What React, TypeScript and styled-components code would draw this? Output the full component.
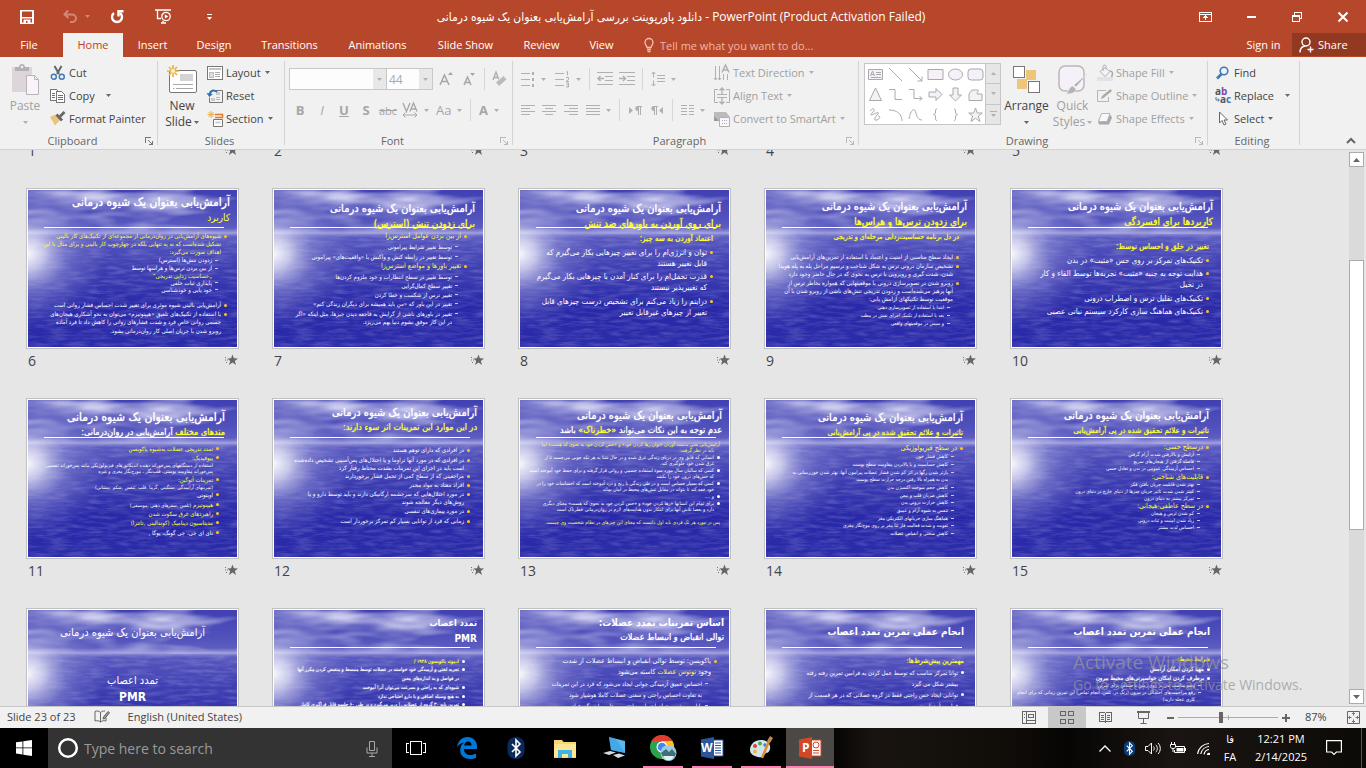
import React from "react";
import styled, { createGlobalStyle, css } from "styled-components";

const Global = createGlobalStyle`
  * { box-sizing: border-box; }
  html, body { margin: 0; height: 100%; overflow: hidden; }
  body { font-family: "Open Sans", "DejaVu Sans Condensed", "DejaVu Sans", sans-serif; font-size: 11px; color: #444; }
  button, input { font: inherit; color: inherit; border: 0; background: none; padding: 0; margin: 0; outline: none; }
  button { white-space: nowrap; }
  svg { display: block; flex: none; overflow: visible; }
`;

const Shell = styled.div`
  display: flex;
  flex-direction: column;
  height: 100vh;
  overflow: hidden;
  background: #e6e6e6;
`;

/* ---------- title bar and tabs ---------- */

const TitleBar = styled.header`
  display: flex;
  align-items: center;
  justify-content: space-between;
  flex: none;
  height: 33px;
  background: #b7472a;
  color: #fff;
`;
const QuickAccess = styled.div`
  display: flex;
  align-items: center;
  flex: 1;
  padding-left: 16px;
`;
const QuickButton = styled.button<{ $w: number; $dim?: boolean }>`
  display: flex;
  align-items: center;
  justify-content: center;
  gap: 8px;
  width: ${(p) => p.$w}px;
  height: 30px;
  opacity: ${(p) => (p.$dim ? 0.35 : 1)};
`;
const DocTitle = styled.h1`
  margin: 0;
  font-size: 12px;
  font-weight: 400;
  white-space: nowrap;
`;
const WindowButtons = styled.div`
  display: flex;
  flex: 1;
  justify-content: flex-end;
  padding-left: 20px;
`;
const WindowButton = styled.button`
  display: flex;
  align-items: center;
  justify-content: center;
  width: 46px;
  height: 30px;
`;
const TabBar = styled.nav`
  display: flex;
  flex: none;
  height: 24px;
  background: #b7472a;
  color: #fff;
`;
const Tab = styled.button<{ $w: number; $active?: boolean; $after?: number }>`
  width: ${(p) => p.$w}px;
  height: 24px;
  margin-right: ${(p) => p.$after ?? 0}px;
  line-height: 24px;
  text-align: center;
  ${(p) => p.$active && css`background: #f1f1f1; color: #c43e1c;`}
`;
const TellMe = styled.label`
  display: flex;
  align-items: center;
  gap: 6px;
  flex: 1;
  padding-left: 15px;
`;
const TellInput = styled.input`
  flex: 1;
  &::placeholder { color: #efb8a6; opacity: 1; }
`;
const ShareButton = styled.button`
  display: flex;
  align-items: center;
  gap: 4px;
  width: 74px;
  height: 23px;
  padding-left: 7px;
  background: #923922;
`;

/* ---------- ribbon ---------- */

const RibbonBar = styled.section`
  display: flex;
  flex: none;
  height: 93px;
  background: #f1f1f1;
  border-bottom: 1px solid #d2d2d2;
`;
const Group = styled.div<{ $w: number }>`
  display: flex;
  flex-direction: column;
  width: ${(p) => p.$w}px;
  padding-top: 4px;
`;
const GroupBody = styled.div<{ $pad?: number }>`
  display: flex;
  height: 71px;
  padding-left: ${(p) => p.$pad ?? 3}px;
`;
const GroupFooter = styled.div`
  display: flex;
  align-items: center;
  height: 17px;
  padding-right: 3px;
  color: #666;
`;
const GroupName = styled.span`
  flex: 1;
  text-align: center;
`;
const LauncherButton = styled.button<{ $off?: boolean }>`
  width: 9px;
  height: 9px;
  opacity: ${(p) => (p.$off ? 0.45 : 1)};
`;
const Divider = styled.div`
  flex: none;
  width: 1px;
  height: 84px;
  margin-top: 4px;
  background: #d4d4d4;
`;
const Column = styled.div<{ $w?: number }>`
  display: flex;
  flex-direction: column;
  width: ${(p) => (p.$w ? p.$w + "px" : "auto")};
`;
const SmallButton = styled.button<{ $off?: boolean; $gap?: number }>`
  display: flex;
  align-items: center;
  gap: 3px;
  height: 23px;
  padding: 0 4px;
  color: ${(p) => (p.$off ? "#a0a0a0" : "#444")};
  & > svg:last-child:not(:first-child) { margin-left: ${(p) => p.$gap ?? 1}px; }
`;
const BigButton = styled.button<{ $w: number; $off?: boolean }>`
  display: flex;
  flex-direction: column;
  align-items: center;
  width: ${(p) => p.$w}px;
  color: ${(p) => (p.$off ? "#a0a0a0" : "#444")};
  font-size: 12px;
  line-height: 16px;
`;
const BigIcon = styled.span`
  display: flex;
  align-items: center;
  justify-content: center;
  height: 37px;
`;
const BigLine = styled.span`
  display: flex;
  align-items: center;
  gap: 2px;
  height: 16px;
`;
const ToolRow = styled.div<{ $first?: boolean }>`
  display: flex;
  align-items: center;
  height: 22px;
  margin-top: ${(p) => (p.$first ? 7 : 9)}px;
`;
const Tool = styled.button<{ $w?: number; $split?: boolean; $size?: number }>`
  display: flex;
  align-items: center;
  justify-content: ${(p) => (p.$split ? "flex-start" : "center")};
  gap: 6px;
  width: ${(p) => p.$w ?? (p.$split ? 34 : 22)}px;
  height: 22px;
  padding-left: ${(p) => (p.$split ? 4 : 0)}px;
  color: #a6a6a6;
  font-size: ${(p) => p.$size ?? 13}px;
`;
const ToolSep = styled.span`
  width: 1px;
  height: 22px;
  margin: 0 4px;
  background: #d6d6d6;
`;
const Combo = styled.div<{ $w: number }>`
  display: flex;
  width: ${(p) => p.$w}px;
  height: 22px;
  border: 1px solid #c8c8c8;
  background: #fdfdfd;
  & + & { margin-left: -1px; }
`;
const ComboInput = styled.input`
  flex: 1;
  min-width: 0;
  padding-left: 2px;
  color: #a3a9b8;
  font-size: 12px;
`;
const ComboArrow = styled.button`
  display: flex;
  align-items: center;
  justify-content: center;
  width: 13px;
  background: #e8e8e8;
`;
const Gallery = styled.div`
  display: flex;
  width: 137px;
  height: 62px;
  margin-top: 2px;
  border: 1px solid #c6c6c6;
  background: #fff;
`;
const GalleryGrid = styled.div`
  display: grid;
  grid-template-columns: repeat(6, 20px);
  grid-auto-rows: 20px;
  flex: 1;
`;
const ShapeButton = styled.button`
  display: flex;
  align-items: center;
  justify-content: center;
`;
const GalleryScroll = styled.div`
  display: flex;
  flex-direction: column;
  width: 15px;
  background: #e6e6e6;
  border-left: 1px solid #c6c6c6;
`;
const GalleryStep = styled.button`
  display: flex;
  align-items: center;
  justify-content: center;
  flex: 1;
  & + & { border-top: 1px solid #c6c6c6; }
`;
const RibbonEnd = styled.div`
  display: flex;
  flex: 1;
  align-items: flex-end;
  justify-content: flex-end;
  padding: 0 9px 4px 0;
`;

/* ---------- slide sorter ---------- */

const Workspace = styled.main`
  position: relative;
  display: flex;
  flex: 1;
  min-height: 0;
  overflow: hidden;
`;
const Sorter = styled.div`
  flex: 1;
  overflow: hidden;
`;
const SlideGrid = styled.div`
  display: grid;
  grid-template-columns: repeat(auto-fill, 213px);
  gap: 0 33px;
  margin-top: -172px;
  padding: 0 26px;
`;
const SlideItem = styled.figure`
  margin: 0;
  height: 210px;
`;
const Frame = styled.div`
  height: 161px;
  padding: 1px;
  border: 1px solid #c0c0c0;
  background: #fff;
`;
const Thumb = styled.div`
  display: grid;
  height: 157px;
  overflow: hidden;
  background: #3232ae;
  & > * { grid-area: 1 / 1; min-width: 0; min-height: 0; }
`;
const Content = styled.div`
  z-index: 1;
  direction: rtl;
  font-family: "DejaVu Sans Condensed", "DejaVu Sans", sans-serif;
  color: #fff;
  white-space: nowrap;
`;
const Head = styled.div<{ $top: number; $right: number }>`
  height: 37px;
  padding: ${(p) => p.$top}px ${(p) => p.$right}px 0 0;
`;
type Weight = "plain" | "semi" | "bold";
const weight = (w?: Weight) =>
  w === "bold" ? css`font-weight: 700;` : w === "semi" ? css`font-weight: 400; text-shadow: 0 0 1px currentColor;` : css`font-weight: 400;`;
const Heading = styled.div<{ $size: number; $weight?: Weight; $c?: string }>`
  height: 15px;
  font-size: ${(p) => p.$size}px;
  line-height: 15px;
  color: ${(p) => p.$c ?? "#fff"};
  ${(p) => weight(p.$weight)}
`;
const Rule = styled.div`
  height: 1px;
  margin: 0 13px 0 16px;
  background: #fff;
`;
const Body = styled.div<{ $right: number; $top: number }>`
  padding: ${(p) => p.$top}px ${(p) => p.$right}px 0 0;
`;
const Line = styled.div<{ $h: number; $before: number; $size: number; $c: string; $in: number; $semi?: boolean }>`
  display: flex;
  align-items: center;
  height: ${(p) => p.$h}px;
  margin-top: ${(p) => p.$before}px;
  padding-right: ${(p) => p.$in}px;
  font-size: ${(p) => p.$size}px;
  line-height: ${(p) => p.$h}px;
  color: ${(p) => p.$c};
  ${(p) => weight(p.$semi ? "semi" : "plain")}
`;
const Dot = styled.span<{ $c: string }>`
  width: 3px;
  height: 3px;
  margin-left: 3px;
  border-radius: 50%;
  background: ${(p) => p.$c};
`;
const Dash = styled.span`
  width: 3px;
  height: 1px;
  margin-left: 3px;
  background: #c8c8ec;
`;
const Cover = styled.div`
  display: flex;
  flex-direction: column;
  align-items: center;
  padding-top: 15px;
`;
const CoverBody = styled.div`
  display: flex;
  flex-direction: column;
  align-items: center;
  gap: 2px;
  margin-top: 33px;
`;
const Caption = styled.figcaption`
  display: flex;
  align-items: center;
  justify-content: space-between;
  height: 22px;
  padding: 0 1px 0 2px;
  font-size: 14px;
`;
const ScrollBar = styled.div`
  display: flex;
  flex-direction: column;
  flex: none;
  width: 17px;
  padding: 2px 1px 2px 0;
`;
const ScrollStep = styled.button`
  display: flex;
  align-items: center;
  justify-content: center;
  width: 15px;
  height: 15px;
  background: #fff;
  border: 1px solid #ababab;
`;
const ScrollTrack = styled.div`
  flex: 1;
  width: 15px;
  padding-top: 93px;
  background: #dadada;
`;
const ScrollThumb = styled.div`
  height: 63%;
  width: 15px;
  background: #fff;
  border: 1px solid #ababab;
`;
const Watermark = styled.div`
  position: absolute;
  right: 57px;
  bottom: 10px;
  z-index: 3;
  width: 236px;
  color: rgba(150, 150, 155, 0.75);
  font-size: 14px;
  line-height: 22px;
  white-space: nowrap;
`;
const WatermarkTitle = styled.div`
  font-size: 19px;
  line-height: 24px;
`;

/* ---------- status bar ---------- */

const StatusBar = styled.footer`
  display: flex;
  align-items: center;
  justify-content: space-between;
  flex: none;
  height: 22px;
  background: #f1f1f1;
  border-top: 1px solid #c6c6c6;
`;
const StatusSide = styled.div`
  display: flex;
  align-items: center;
  height: 100%;
  line-height: 19px;
`;
const StatusLeft = styled(StatusSide)`
  gap: 18px;
  padding: 0 0 2px 7px;
`;
const StatusRight = styled(StatusSide)`
  padding-right: 5px;
`;
const ViewButton = styled.button<{ $active?: boolean }>`
  display: flex;
  align-items: center;
  justify-content: center;
  width: 38px;
  height: 100%;
  background: ${(p) => (p.$active ? "#c8c8c8" : "none")};
`;
const ZoomButton = styled.button`
  display: flex;
  align-items: center;
  justify-content: center;
  width: 16px;
  height: 100%;
`;
const ZoomRange = styled.input`
  appearance: none;
  width: 100px;
  height: 15px;
  background: linear-gradient(#ababab, #ababab) center / 100% 1px no-repeat,
    linear-gradient(#ababab, #ababab) 50px center / 1px 5px no-repeat;
  &::-webkit-slider-thumb {
    appearance: none;
    width: 4px;
    height: 11px;
    background: #666;
  }
`;
const Percent = styled.span`
  width: 22px;
  height: 100%;
  margin: 0 18px 0 11px;
`;

/* ---------- taskbar ---------- */

const Taskbar = styled.div`
  display: flex;
  flex: none;
  height: 40px;
  color: #fff;
  background: linear-gradient(90deg, #000 0, #000 60%, #191410 64%, #100c08 74%, #060504 78%, #1a1512 86%, #0c0a07 100%);
`;
const StartButton = styled.button`
  display: flex;
  align-items: center;
  justify-content: center;
  width: 48px;
`;
const Search = styled.label`
  display: flex;
  align-items: center;
  gap: 5px;
  width: 344px;
  padding: 0 14px 0 9px;
  background: #333;
`;
const SearchInput = styled.input`
  flex: 1;
  font-size: 14px;
  &::placeholder { color: #9a9a9a; opacity: 1; }
`;
const TaskItem = styled.button<{ $open?: boolean; $active?: boolean }>`
  display: flex;
  align-items: center;
  justify-content: center;
  width: 48px;
  margin-right: 1px;
  background: ${(p) => (p.$active ? "#4b4846" : "none")};
  ${(p) => p.$open && css`
    background-image: linear-gradient(#ff80b3, #ff80b3);
    background-repeat: no-repeat;
    background-position: center bottom;
    background-size: ${p.$active ? "100%" : "40px"} 2px;
  `}
`;
const FirstTask = styled(TaskItem)`
  margin-right: 3px;
`;
const Tray = styled.div`
  display: flex;
  flex: 1;
  justify-content: flex-end;
`;
const TrayButton = styled.button<{ $w: number }>`
  display: flex;
  flex-direction: column;
  align-items: center;
  justify-content: center;
  width: ${(p) => p.$w}px;
  line-height: 18px;
`;
const ShowDesktop = styled.button`
  width: 5px;
  margin-left: 13px;
  border-left: 1px solid #555;
`;

/* ---------- icons ---------- */

type IconProps = { w?: number; h?: number; children: React.ReactNode; stroke?: string; fill?: string; sw?: number; crisp?: boolean };
const Icon = ({ w = 16, h = 16, children, stroke = "none", fill = "none", sw = 1, crisp }: IconProps) => (
  <svg width={w} height={h} viewBox={`0 0 ${w} ${h}`} fill={fill} stroke={stroke} strokeWidth={sw} shapeRendering={crisp ? "crispEdges" : undefined} aria-hidden>
    {children}
  </svg>
);
const Arrow = ({ c = "#666" }: { c?: string }) => (
  <Icon w={5} h={3} fill={c}><path d="M0 0h5L2.500 3z" /></Icon>
);
const Up = ({ c = "#666" }: { c?: string }) => (
  <Icon w={7} h={4} fill={c}><path d="M0 4h7L3.500 0z" /></Icon>
);
const G = "#b0b0b0";

const Launcher = ({ off }: { off?: boolean }) => (
  <LauncherButton $off={off} aria-label="More options">
    <Icon w={8} h={8} stroke="#777" crisp><path d="M0.500 6V0.500H6M3 3l4 4M7.500 4v3.500H4" /></Icon>
  </LauncherButton>
);

const SaveIcon = () => (
  <Icon w={14} h={14}><path d="M0 0h14v14H0z" fill="#fff" /><path d="M2 1.500h10V7H2zM2 8.500h10v4h-1.500V9.500h-7v3H2z" fill="#b7472a" /><path d="M6 11h1.500v2H6z" fill="#b7472a" /></Icon>
);
const UndoIcon = () => (
  <Icon w={14} h={13} stroke="#fff" sw={2}><path d="M5 0.500L1.500 4.500 5.500 8M2 4.500h7a4 3.800 0 0 1 0 7.600H7" /></Icon>
);
const RedoIcon = () => (
  <Icon w={14} h={14} stroke="#fff" sw={2.4}><path d="M10 3A5 5 0 1 1 4 3" /><path d="M8.500 6.500V1.200h5" sw-={undefined} /></Icon>
);
const ShowIcon = () => (
  <Icon w={17} h={15} stroke="#fff" sw={1.3}>
    <path d="M0 1h16M2.500 1v8.500H6M6 14h5M8 12v2" /><circle cx="11" cy="7.500" r="4.200" /><path d="M9.800 5.200v4.600l3.400-2.300z" fill="#fff" stroke="none" />
  </Icon>
);

const ScissorsIcon = () => (
  <Icon><path d="M4.500 1l4.500 8M11.500 1L7 9" stroke="#666" strokeWidth="2" /><circle cx="3.800" cy="11.800" r="2.500" stroke="#3f78b5" strokeWidth="1.400" /><circle cx="11.800" cy="11.800" r="2.500" stroke="#3f78b5" strokeWidth="1.400" /></Icon>
);
const CopyIcon = () => (
  <Icon crisp><path d="M.5 1.500h6l3 3v8h-9z" fill="#fff" stroke="#777" /><path d="M2 5.500h3M2 7.500h3M2 9.500h3" stroke="#3f78b5" /><path d="M6.500 3.500h5l3 3v8h-8z" fill="#fff" stroke="#777" /><path d="M8 7.500h5M8 9.500h5M8 11.500h5" stroke="#3f78b5" /></Icon>
);
const BrushIcon = () => (
  <Icon><path d="M0 6l5-2.500 5 5.500-5 5.500z" fill="#ecc37a" /><path d="M5.500 4.500l5.500 6 2-2-5.500-6z" fill="#666" /><path d="M10 5.500L14.500 1" stroke="#666" strokeWidth="2.600" /></Icon>
);
const PasteIcon = () => (
  <Icon w={30} h={32}><path d="M2 3h20v25H2z" fill="#dcd6dc" /><path d="M5 7V3h4c0-4 6-4 6 0h4v4z" fill="#b5b0b5" /><circle cx="12" cy="3" r="1.300" fill="#f1f1f1" /><path d="M16.500 11.500h8l4 4v15h-12z" fill="#f8f4fa" stroke="#b8b4b8" /><path d="M24.500 11.500v4h4" stroke="#b8b4b8" /></Icon>
);
const NewSlideIcon = () => (
  <Icon w={30} h={30}>
    <rect x="2.500" y="5.500" width="27" height="22" rx="1.500" fill="#fff" stroke="#777" />
    <path d="M13 9h13v7H13z" fill="#d4d4d4" /><path d="M6 19.500h20M6 23.500h1.500M9 23.500h17" stroke="#aaa" />
    <path d="M6 0v12M0 6h12M2 2l8 8M10 2l-8 8" stroke="#eab14a" strokeWidth="1.700" /><circle cx="6" cy="6" r="2" fill="#fff1cf" />
  </Icon>
);
const LayoutIcon = () => (
  <Icon crisp><path d="M.5 1.500h15v13H.5z" fill="#fff" stroke="#777" /><path d="M2 3h12v2H2z" fill="#c4c4c4" /><path d="M2.500 7.500h4v5h-4z" fill="#ddd" stroke="#bbb" /><path d="M8 7.500h5M8 9.500h5M8 11.500h5" stroke="#aaa" /></Icon>
);
const ResetIcon = () => (
  <Icon><path d="M9 2.500h6.500v12H2.500v-5" stroke="#777" fill="none" /><path d="M9 4h4v3H9zM4 10h4v3H4z" fill="#ccc" /><path d="M9 9.500h4M9 11.500h4" stroke="#bbb" /><path d="M10 4C7 1.500 3 2 2.500 7" stroke="#2f72b5" strokeWidth="2" /><path d="M-.5 5l2.800 4L6 6z" fill="#2f72b5" /></Icon>
);
const SectionIcon = () => (
  <Icon><path d="M4 0v7M.5 3.500h7M1.500 1l5 5M6.500 1l-5 5" stroke="#eab14a" /><path d="M8 3.500h7.500v3H8" stroke="#e07b28" strokeWidth="1.500" /><path d="M6.500 8.500h9v7h-9z" fill="#fff" stroke="#777" /><path d="M8.500 10.500h5v2h-5z" fill="#ccc" /></Icon>
);
const EraserIcon = () => (
  <Icon><path d="M1 9L4 1l3 8M2 6.500h4" stroke="#aaa" strokeWidth="1.300" /><path d="M3.500 11.500l8-7 3.500 4-8 7z" fill="#bbb" stroke="#f1f1f1" /></Icon>
);
const BulletsIcon = () => (
  <Icon w={14} h={16} stroke={G} crisp><path d="M0 2.500h9M0 8.500h9M0 14.500h9" /><path d="M11 1h2v3h-2zM11 7h2v3h-2zM11 13h2v3h-2z" fill={G} stroke="none" /></Icon>
);
const NumbersIcon = () => (
  <Icon w={15} h={16} stroke={G}><path d="M0 2.500h9M0 8.500h9M0 14.500h9" shapeRendering="crispEdges" /><path d="M11.500 1l1-.5v4M11 6.500h2.500v2L11 10.500h3M11 12h2.500v4H11M11.500 14h2" /></Icon>
);
const IndentIcon = ({ flip }: { flip?: boolean }) => (
  <Icon w={16} h={14} stroke={G}><path d="M0 .5h16M8 4.500h8M8 8.500h8M0 12.500h16" shapeRendering="crispEdges" />{flip ? <path d="M0 6.500h6M4 4l2.500 2.500L4 9" strokeWidth="1.500" /> : <path d="M7 6.500H1M3.500 4L1 6.500 3.500 9" strokeWidth="1.500" />}</Icon>
);
const SpacingIcon = () => (
  <Icon w={14} h={16} stroke={G}><path d="M6 4.500h8M6 7.500h8M6 10.500h8" shapeRendering="crispEdges" /><path d="M2.500 1v5.500M.5 3l2-2 2 2M2.500 9.500V15M.5 13l2 2 2-2" /></Icon>
);
const AlignIcon = ({ kind }: { kind: "l" | "c" | "r" | "j" }) => {
  const d = { l: "M0 .5h14M0 3.500h9M0 6.500h14M0 9.500h9", c: "M0 .5h14M3 3.500h8M0 6.500h14M3 9.500h8", r: "M0 .5h14M5 3.500h9M0 6.500h14M5 9.500h9", j: "M0 .5h14M0 3.500h14M0 6.500h14M0 9.500h14" }[kind];
  return <Icon w={14} h={10} stroke={G} crisp><path d={d} /></Icon>;
};
const ParaIcon = ({ rtl }: { rtl?: boolean }) => (
  <Icon w={12} h={9} fill={G}>
    <path d={rtl ? "M12 1v7L8 4.500z" : "M0 1v7l4-3.500z"} />
    <path transform={rtl ? "translate(-6 0)" : undefined} d="M8.500 0H13v1h-1v8h-1V1h-1v8H9V5C5.500 5 5.500 0 8.500 0z" />
  </Icon>
);
const ColumnsIcon = () => (
  <Icon w={13} h={12} stroke={G} crisp><path d="M0 1.500h6M0 4.500h6M0 7.500h6M0 10.500h6M8 1.500h5M8 4.500h5M8 7.500h5M8 10.500h5" /></Icon>
);
const TextDirIcon = () => (
  <Icon stroke={G}><path d="M1.500 1v14M5.500 1v14M9.500 9v6M13.500 9v6M0 13l1.500 2L3 13M4 13l1.500 2L7 13" /><path d="M8 7.500L11.500 0 15 7.500M9.500 5h4" strokeWidth="1.500" /></Icon>
);
const AlignTextIcon = () => (
  <Icon stroke={G}><path d="M4 1.500H.5v13H4M12 1.500h3.500v13H12M3 6.500h10M3 9.500h10" /><path d="M8 0v6M5.500 2.500L8 0l2.500 2.500M8 10v6M5.500 13.500L8 16l2.500-2.500" strokeWidth="1.300" /></Icon>
);
const SmartIcon = () => (
  <Icon><path d="M0 1h12l4 5H6v4H0z" fill="#bbb" /><path d="M0 5l5 5H0z" fill="#999" /><path d="M5.500 6.500h10v9h-10z" fill="#fbf6fb" stroke="#b0b0b0" /><path d="M8 9.500h6M8 12.500h6" stroke="#b9aab9" strokeDasharray="1 1" /></Icon>
);
const ArrangeIcon = () => (
  <Icon w={27} h={27} crisp><path d="M13 4h10v10H13zM4 13h10v10H4z" fill="#eec67a" /><path d="M.5.500h11v11H.5zM15.500 15.500h11v11h-11z" fill="#fff" stroke="#777" /></Icon>
);
const QuickIcon = () => (
  <Icon w={30} h={30}><rect x="1" y="1" width="25" height="25" rx="6" fill="#f6f0f8" stroke="#b8b8b8" strokeWidth="1.500" /><path d="M30 8L18 22l-2-2z" fill="#aaa" stroke="#f1f1f1" strokeWidth=".6" /><path d="M8 29c3-1 2-7 7-8l3 3c-1 5-7 5-10 5z" fill="#b4b4b4" stroke="#f1f1f1" strokeWidth=".6" /></Icon>
);
const FillIcon = () => (
  <Icon><path d="M0 12h16v4H0z" fill="#e4e0e6" /><path d="M3 6.500l5-4 5 4-5 5z" fill="#f6f0f8" stroke="#b0b0b0" /><path d="M6 6V1.500a1.500 1.500 0 0 1 3 0V4" stroke="#b0b0b0" /><path d="M13 6c3 0 3 3 1.500 6" stroke="#a8a8a8" strokeWidth="1.500" /></Icon>
);
const OutlineIcon = () => (
  <Icon><path d="M9 2.500H.5v11h11V9" stroke="#b8b4b8" fill="none" /><path d="M4 11l1-3 8.500-7L15 3 6.500 10z" fill="#aaa" /></Icon>
);
const EffectsIcon = () => (
  <Icon><path d="M4 3.500h9l2 3-3 7H2l-1-3z" fill="#a8a8a8" /><path d="M4.500 2.500h8.500l-3 8H1.500z" fill="#fbf6fb" stroke="#b8b8b8" /></Icon>
);
const FindIcon = () => (
  <Icon stroke="#3f78b5"><circle cx="9" cy="6" r="3.800" strokeWidth="1.600" /><path d="M6.500 9L2 13.500" strokeWidth="2.600" /></Icon>
);
const ReplaceLabel = styled.text`
  font: 700 10px "Open Sans", sans-serif;
`;
const ReplaceIcon = () => (
  <Icon><ReplaceLabel x="0" y="7" fill="#555">a</ReplaceLabel><ReplaceLabel x="6" y="7" fill="#8848a8">b</ReplaceLabel><ReplaceLabel x="5" y="15" fill="#555">a</ReplaceLabel><ReplaceLabel x="11" y="15" fill="#3f78b5">c</ReplaceLabel><path d="M1 9v3h3M2.800 10.500L4.500 12l-1.700 1.500" stroke="#3f78b5" /></Icon>
);
const SelectIcon = () => (
  <Icon><path d="M4.500 1v11l2.500-2.500 2 4.500 2-1-2-4h3.500z" fill="#fff" stroke="#666" /></Icon>
);
const SHAPES: React.ReactNode[] = [
  <g key="t"><path d="M.5 2.500h14v10H.5z" fill="#f6f0f8" /><path d="M2.500 9L4.500 4l2 5M3 7.500h3M8 5.500h5M8 7.500h5M3 10.500h10" /></g>,
  <path key="l" d="M1 1l13 13" />,
  <path key="la" d="M1 1l13 13M14 9.500V14H9.500" />,
  <path key="r" d="M0 2.500h15v10H0z" fill="#f6f0f8" />,
  <ellipse key="o" cx="7.500" cy="7.500" rx="7" ry="5.500" fill="#f6f0f8" />,
  <rect key="rr" x="0" y="2" width="15" height="11" rx="3" fill="#f6f0f8" />,
  <path key="tr" d="M7.500 1L13.500 13.500h-12z" fill="#f6f0f8" />,
  <path key="e" d="M1 2.500h6v10h7" />,
  <path key="ea" d="M1 2.500h5v9h8M11.500 9l2.500 2.500L11.500 14" />,
  <path key="ar" d="M1 5h7V1.500l6 6-6 6V10H1z" fill="#f6f0f8" />,
  <path key="ad" d="M5 1h5v7h3.500l-6 6-6-6H5z" fill="#f6f0f8" />,
  <path key="p" d="M1 13.500V7l3-4h6c1 2-1 2-1 4h5v6.500z" fill="#f6f0f8" />,
  <path key="s" d="M2 4c3-4 6-2 3 1S2 9 6 7s6-2 3 1-3 6 0 5 4-4 1-4" />,
  <path key="c" d="M1 3c8 0 13 4 13 11" />,
  <path key="w" d="M1 12C3 1 7 1 8 6s3 7 6 7" />,
  <path key="b1" d="M9 2C7 2 7.500 3.500 7.500 5S7 7.500 5.500 7.500c1.500 0 2 1 2 2.500s-.5 3.500 1.500 3.500" />,
  <path key="b2" d="M6 2c2 0 1.500 1.500 1.500 3s.5 2.500 2 2.500c-1.500 0-2 1-2 2.500S8 13.500 6 13.500" />,
  <path key="st" d="M7.500 1l1.800 5h5L10.300 9l1.700 5.500-4.500-3.200L3 14.500 4.700 9 .7 6h5z" fill="#f6f0f8" />,
];

const StarIcon = () => (
  <Icon w={13} h={12} fill="#666"><path d="M7.500.5l1.400 3.800 4.100.1-3.200 2.500 1.200 4-3.500-2.300L4 10.900l1.200-4L2.500 4.400l3.600-.1z" /><path d="M0 3.500h2M0 6h3M1 8.500h2" stroke="#777" strokeDasharray="1 1" /></Icon>
);

/* ---------- slide artwork ---------- */

const Sea = () => (
  <svg width="100%" height="100%" viewBox="0 0 209 157" preserveAspectRatio="none" aria-hidden>
    <rect width="209" height="157" fill="url(#sky)" />
    <rect width="209" height="44" filter="url(#clouds)" fill="#fff" />
    <rect y="44" width="209" height="113" fill="url(#water)" />
    <rect y="44" width="209" height="113" filter="url(#ripples)" />
    <rect y="38" width="209" height="10" fill="url(#haze)" />
    <rect width="209" height="157" fill="url(#sun)" />
  </svg>
);
const DefsSvg = styled.svg`
  position: absolute;
`;
const SeaDefs = () => (
  <DefsSvg width="0" height="0" aria-hidden>
    <defs>
      <linearGradient id="sky" x1="0" y1="0" x2="0" y2="1"><stop offset="0" stopColor="#4040b4" /><stop offset=".18" stopColor="#5252bc" /><stop offset=".28" stopColor="#6464c4" /></linearGradient>
      <linearGradient id="water" x1="0" y1="0" x2="0" y2="1"><stop offset="0" stopColor="#5a5ac0" /><stop offset=".25" stopColor="#4242b4" /><stop offset=".65" stopColor="#2828a8" /><stop offset="1" stopColor="#2c2caa" /></linearGradient>
      <linearGradient id="haze" x1="0" y1="0" x2="0" y2="1"><stop offset="0" stopColor="#a6a6e0" stopOpacity="0" /><stop offset=".5" stopColor="#b4b4e6" stopOpacity=".75" /><stop offset="1" stopColor="#8080d0" stopOpacity="0" /></linearGradient>
      <radialGradient id="sun" gradientUnits="userSpaceOnUse" cx="0" cy="64" r="78"><stop offset="0" stopColor="#fff" stopOpacity=".95" /><stop offset=".2" stopColor="#eeeefa" stopOpacity=".75" /><stop offset=".5" stopColor="#a8a8e0" stopOpacity=".4" /><stop offset="1" stopColor="#8080d0" stopOpacity="0" /></radialGradient>
      <filter id="clouds" x="0" y="0" width="1" height="1"><feTurbulence type="fractalNoise" baseFrequency=".012 .05" numOctaves="3" seed="8" /><feColorMatrix values="0 0 0 0 .78  0 0 0 0 .78  0 0 0 0 .94  2.2 0 0 0 -.95" /></filter>
      <filter id="ripples" x="0" y="0" width="1" height="1"><feTurbulence type="fractalNoise" baseFrequency=".05 .3" numOctaves="3" seed="4" /><feColorMatrix values="0 0 0 0 .65  0 0 0 0 .65  0 0 0 0 .92  .5 0 0 0 -.2" /></filter>
    </defs>
  </DefsSvg>
);

/* ---------- slide data ---------- */

const Y = "#ffff33";
const W = "#ffffff";
const TITLE = "آرامش‌یابی بعنوان یک شیوه درمانی";

type Kind = "b" | "w" | "c" | "h" | "d" | "e";
type Row = { t: React.ReactNode; k: Kind; c?: string; h?: number; before?: number; size?: number; semi?: boolean };
type SlideData = {
  title: React.ReactNode; titleSize?: number; titleWeight?: Weight; top: number; right: number;
  sub?: React.ReactNode; subColor?: string; subWeight?: Weight; subSize?: number;
  bodyTop: number; bodyRight: number; h: number; size: number; rows: Row[];
};
const r = (k: Kind, t: React.ReactNode, before = 0, o: Partial<Row> = {}): Row => ({ k, t, before, ...o });
const y = { c: Y };
const Yellow = styled.span`color: ${Y};`;
const Small = styled.span`font-size: 5px; color: #fff;`;

const SLIDES: Record<number, SlideData> = {
  6: { title: TITLE, titleSize: 12, top: 5, right: 7, sub: "کاربرد", subColor: Y, bodyTop: 4, bodyRight: 10, h: 8, size: 6, rows: [
    r("b", "شیوه‌های آرامش‌یابی در روان‌درمانی از مجموعه‌ای از تکنیک‌های کار بالینی", 0, y),
    r("c", "تشکیل شده‌است که نه به تنهایی بلکه در چهارچوب کار بالینی و برای مثال با این", 0, y),
    r("c", "اهداف صورت می‌گیرد:", 0, y),
    r("d", "زدودن تنش‌ها (استرس)"),
    r("d", "از بین بردن ترس‌ها و هراسها توسط"),
    r("e", "„حساسیت زدایی تدریجی“", 0, { c: Y, h: 7 }),
    r("d", "پایداری ثبات خلقی", 0, { h: 7 }),
    r("d", "خود یابی و خودشناسی", 0, { h: 7 }),
    r("b", "آرامش‌یابی بالینی شیوه موثری برای تغییر شدت احساس فشار روانی است", 8),
    r("b", "با استفاده از تکنیک‌های تلفیق «هیپنوتیزم» می‌توان به نحو آشکاری هیجان‌های", 1),
    r("c", "جسمی روانی خاص فرد و شدت فشارهای روانی را کاهش داد تا فرد آماده"),
    r("c", "روبرو شدن با جریان اصلی کار روان‌درمانی بشود.", 1),
  ] },
  7: { title: TITLE, top: 11, right: 8, sub: "برای زدودن تنش (استرس)", subColor: Y, subWeight: "semi", bodyTop: 4, bodyRight: 16, h: 9, size: 6, rows: [
    r("b", "از بین بردن عوامل استرس‌زا", 0, { c: Y, size: 7 }),
    r("d", "توسط تغییر شرایط پیرامونی", 1),
    r("d", "توسط تغییر در رابطه کنش و واکنش با «واقعیت‌های» پیرامونی", 1),
    r("b", "تغییر باورها و مواضع استرس‌زا", 1, { c: Y, size: 7 }),
    r("d", "توسط تغییر در سطح انتظارات و خود ملزوم کردن‌ها", 1),
    r("d", "تغییر سطح کمال‌گرایی"),
    r("d", "تغییر ترس از شکست و خطا کردن"),
    r("d", "تغییر در این باور که «من باید همیشه برای دیگران زندگی کنم»"),
    r("d", "تغییر در باورهای ناشی از گرایش به فاجعه دیدن چیزها، مثل اینکه «اگر", 1),
    r("e", "در این کار موفق نشوم دنیا بهم می‌ریزد.", 0, { h: 7 }),
  ] },
  8: { title: TITLE, top: 11, right: 8, sub: "برای روی آوردن به باورهای ضد تنش", subColor: Y, subWeight: "semi", bodyTop: 5, bodyRight: 16, h: 11, size: 8, rows: [
    r("h", "اعتماد آوردن به سه چیز:", 0, { c: Y, semi: true }),
    r("b", "توان و انرژی‌ام را برای تغییر چیزهایی بکار می‌گیرم که", 3),
    r("c", "قابل تغییر هستند"),
    r("b", "قدرت تحمل‌ام را برای کنار آمدن با چیزهایی بکار می‌گیرم", 2),
    r("c", "که تغییرپذیر نیستند"),
    r("b", "درایتم را زیاد می‌کنم برای تشخیص درست چیزهای قابل", 3),
    r("c", "تغییر از چیزهای غیرقابل تغییر"),
  ] },
  9: { title: TITLE, top: 9, right: 8, sub: "برای زدودن ترس‌ها و هراس‌ها", subColor: Y, subWeight: "semi", bodyTop: 5, bodyRight: 16, h: 8, size: 6, rows: [
    r("h", "در دل برنامه حساسیت‌زدایی مرحله‌ای و تدریجی", 0, { c: Y, semi: true, size: 7 }),
    r("b", "ایجاد سطح مناسبی از امنیت و اعتماد با استفاده از تمرین‌های آرامش‌یابی", 12),
    r("b", "تشخیص سازمان درونی ترس به شکل شناخت و ترسیم مراحل پله به پله هویدا", 1),
    r("c", "شدن، شدت گیری و رویرویی با ترس به نحوی که در حال حاضر وجود دارد"),
    r("b", "روبرو شدن در تصویرسازی درونی با موقعیتهایی که همواره بخاطر ترس از", 1),
    r("c", "آنها پرهیز می‌شده‌است و زدودن تدریجی تنش‌های ناشی از روبرو شدن با آن"),
    r("c", "موقعیت توسط تکنیکهای آرامش یابی:"),
    r("d", "ابتدا با استفاده از تصویرسازی ذهنی", 0, { size: 5 }),
    r("d", "بعد با استفاده از تکنیک اجرای نقش در مطب", 0, { size: 5 }),
    r("d", "و سپس در موقعیتهای واقعی", 0, { size: 5 }),
  ] },
  10: { title: TITLE, top: 9, right: 8, sub: <>کاربردها برای افسردگی</>, subColor: Y, subWeight: "semi", bodyTop: 13, bodyRight: 12, h: 11, size: 8, rows: [
    r("h", "تغییر در خلق و احساس توسط:", 0, { c: Y, semi: true }),
    r("b", "تکنیک‌های تمرکز بر روی حس «مثبت» در بدن", 3),
    r("b", "هدایت توجه به جنبه «مثبت» تجربه‌ها توسط القاء و کار", 2),
    r("c", "در تخیل"),
    r("b", "تکنیک‌های تقلیل ترس و اضطراب درونی", 3),
    r("b", "تکنیک‌های هماهنگ سازی کارکرد سیستم نباتی عصبی", 2),
  ] },
  11: { title: TITLE, titleSize: 12, top: 10, right: 12, sub: <><Yellow>متدهای مختلف</Yellow> آرامش‌یابی در روان‌درمانی:</>, subSize: 9, subWeight: "semi", bodyTop: 6, bodyRight: 18, h: 9, size: 6, rows: [
    r("b", "تمدد تدریجی عضلات به‌شیوه یاکوبسن", 0, y),
    r("b", "بیوفیدبک:", 0, y),
    r("c", "استفاده از دستگاههای پس‌خوراند دهنده اندیکاتورهای فیزیولوژیکی مانند پس‌خوراند تنفسی،", 0, { h: 6, size: 5 }),
    r("c", "پس‌خوراند مقاومت پوستی، قلب‌نگار ، مورج‌نگار مغزی و غیره", 0, { h: 6, size: 5 }),
    r("b", "تمرینات آتوگین:", 1, y),
    r("c", "(تمرینهای آرامیدگی ,سنگینی ,گرما ,قلب ,تنفس ,شکم ,پیشانی)", 0, { h: 6, size: 5 }),
    r("b", "اویتونی"),
    r("b", <>هیپنوتیزم <Small>(تلقین ,سفرهای ذهنی ,موسیقی)</Small></>, 1, y),
    r("b", "راهبردهای غرق سکوت شدن", 0, y),
    r("b", "مدیتاسیون دینامیک (کوندالینی ,تانترا)", 0, y),
    r("b", "تای ای چی، چی گونگ، یوگا ,", 1),
  ] },
  12: { title: TITLE, top: 5, right: 6, sub: "در این موارد این تمرینات اثر سوء دارند:", subColor: Y, subSize: 9, subWeight: "semi", bodyTop: 8, bodyRight: 13, h: 8, size: 6, rows: [
    r("b", "در افرادی که دارای توهم هستند"),
    r("b", "در افرادی که در مورد آنها تراوما و یا اختلال‌های پس‌آسیبی تشخیص داده‌شده", 2),
    r("c", "است باید در اجرای این تمرینات بشدت محتاط رفتار کرد"),
    r("b", "مراجعینی که از سطح کمی از تحمل فشار برخوردارند"),
    r("b", "افراد معتاد به مواد مخدر", 1),
    r("b", "در مورد اختلال‌هایی که سرچشمه ارگانیکی دارند و باید توسط دارو و یا", 1),
    r("c", "روش‌های دیگر معالجه شوند"),
    r("b", "در مورد بیماری‌های تنفسی", 1),
    r("b", "زمانی که فرد از توانایی بسیار کم تمرکز برخوردار است", 2),
  ] },
  13: { title: TITLE, top: 8, right: 7, sub: <>عدم توجه به این نکات می‌تواند <Yellow>«خطرناک»</Yellow> باشد</>, subSize: 9, subWeight: "semi", bodyTop: 3, bodyRight: 9, h: 6, size: 5, rows: [
    r("h", "آرامش‌یابی یعنی بدست آوردن «توان رها کردن خود» و «حس کردن خود به نحوی که هست» اما", 0, y),
    r("c", "باید در نظر گرفت:", 0, y),
    r("w", "انسانی که قایق وی در دریای زندگی غرق شده و در حال شنا به هر تکه چوبی می‌چسبد تا از", 1),
    r("c", "غرق شدن خود جلوگیری کند."),
    r("w", "کسی که سالیان سال مورد سوء استفاده جسمی و روانی قرار گرفته و برای حفظ خود آموخته است", 1),
    r("c", "که حس‌های درون خود را بکشد"),
    r("w", "کسی که بسیار حساس است و در طی زندگی با رنج و درد آموخته است که احساسات خود را در", 1),
    r("c", "خود خفه کند تا بتواند در مقابل تنش‌های محیط در امان بماند"),
    r("w", "و ....", 1),
    r("w", "برای تمام این انسانها «رها کردن خود» و «حس کردن خود به نحوی که هست» معنای دیگری", 1),
    r("c", "دارد و بعضا تلاش آنها برای ابتکار بدون هدایت‌های لازم در روان‌درمانی خطرناک است"),
    r("h", "پس در مورد هر تک فردی باید اول دانست که معنای این چیزهای در نظام شخصیت وی چیست.", 7, y),
  ] },
  14: { title: TITLE, top: 10, right: 12, sub: "تاثیرات و علائم تحقیق شده در پی آرامش‌یابی", subColor: Y, subSize: 8, subWeight: "semi", bodyTop: 6, bodyRight: 12, h: 7, size: 5, rows: [
    r("b", "در سطح فیزیولوژیکی", 0, { c: Y, h: 8, size: 7 }),
    r("d", "کاهش فشار خون", 1),
    r("d", "کاهش حساسیت و یا بالابردن مقاومت سطح پوست", 1),
    r("d", "بازتر شدن رگها در اثر کم شدن فشار عضلات پیرامون آنها، بهتر شدن خون‌رسانی به", 1),
    r("e", "بدن به همراه بالا رفتن درجه حرارت سطح پوست"),
    r("d", "کاهش حجم سوخت اکسیژن بدن", 1),
    r("d", "کاهش ضربان قلب و نبض", 1),
    r("d", "کاهش حرارت درونی بدن", 0),
    r("d", "تنفس به شیوه آرام و عمیق", 1),
    r("d", "هماهنگ سازی جریانهای الکتریکی مغز", 1),
    r("d", "تقویت و شدت فعالیت فاز تتا مغز بر روی موج‌نگار مغزی", 0),
    r("d", "کاهش سختی و انقباض عضلات", 1),
  ] },
  15: { title: TITLE, top: 8, right: 12, sub: "تاثیرات و علائم تحقیق شده در پی آرامش‌یابی", subColor: Y, subSize: 8, subWeight: "semi", bodyTop: 6, bodyRight: 12, h: 7, size: 5, rows: [
    r("b", "درسطح حسی:", 0, { c: Y, size: 7 }),
    r("d", "آرامش و بالارفتن شدت آرام گرفتن"),
    r("d", "فاصله گرفتن از هیجان‌های سریع"),
    r("d", "احساس آرمیدگی عمومی در بدن و تعادل حسی"),
    r("b", "قابلیت‌های شناختی:", 2, { c: Y, size: 7 }),
    r("d", "بهتر شدن قابلیت جریان یافتن فکر"),
    r("d", "کمتر شدن شدت تاثیر جریان چیزها از دنیای خارج در دنیای درون"),
    r("d", "تمرکز بیشتر به دنیای درون"),
    r("b", "در سطح عاطفی-هیجانی:", 1, { c: Y, size: 7 }),
    r("d", "کم شدن ترس و هیجان"),
    r("d", "زیاد شدن امنیت و ثبات درونی"),
    r("d", "احساس لذت بیشتر"),
  ] },
  17: { title: "تمدد اعصاب", titleSize: 9, titleWeight: "bold", top: 6, right: 6, sub: "PMR", subWeight: "bold", subSize: 10, bodyTop: 9, bodyRight: 18, h: 8, size: 5, rows: [
    r("w", "ادموند یاکوبسون ۱۹۲۸ /", 0, { c: Y, semi: true }),
    r("w", "تجربه لختی و آرمیدگی خود خواسته در عضلات توسط منبسط و منقبض کردن مکرر آنها", 0, { semi: true }),
    r("c", "در فواصل و به اندازه‌های معین", 1, { semi: true }),
    r("w", "شیوه‌ای که به راحتی و بسرعت می‌توان آنرا آموخت", 1, { semi: true }),
    r("w", "به هیچ وسیله اضافی و یا دارو احتیاجی ندارد", 1, { semi: true }),
    r("w", "تمرین پایه ۳۰ گروه از عضلات را دربر می‌گیرد و در طی ۶۰ جلسه قابل فراگیری کامل", 0, { semi: true }),
  ] },
  18: { title: "اساس تمرینات تمدد عضلات:", titleSize: 10, titleWeight: "bold", top: 5, right: 5, sub: "توالی انقباض و انبساط عضلات", subWeight: "semi", subSize: 9, bodyTop: 8, bodyRight: 12, h: 11, size: 7, rows: [
    r("b", "یاکوبسن: توسط توالی انقباض و انبساط عضلات از شدت"),
    r("c", <>وجود <Yellow>تونوس عضلات</Yellow> کاسته می‌شود</>),
    r("d", "احساس عمیق آرمیدگی جوانی ایجاد می‌شود که فرد در این تمرینات", 0, { size: 6 }),
    r("e", "به تفاوت احساس راحتی و سفتی عضلات کاملا هوشیار شود", 0, { size: 6 }),
    r("d", "با این روش می‌توان احساس راحتی و رهایی را در گروههای", 0, { size: 6 }),
  ] },
  19: { title: "انجام عملی تمرین تمدد اعصاب", titleSize: 10, titleWeight: "bold", top: 14, right: 11, bodyTop: 8, bodyRight: 11, h: 11, size: 7, rows: [
    r("h", "مهمترین پیش‌شرط‌ها:", 0, { c: Y, semi: true }),
    r("w", "توانا تمرکز مناسب که توسط عمل کردن به فرامین تمرین رفته رفته", 0, { size: 6 }),
    r("c", "بیشتر شکل می گیرد", 0, { size: 6 }),
    r("w", "توانایی ایجاد حس راحتی فقط در گروه عضلاتی که در هر قسمت از", 0, { size: 6 }),
    r("c", "فرامین آمده‌است", 0, { size: 6 }),
  ] },
  20: { title: "انجام عملی تمرین تمدد اعصاب", titleSize: 10, titleWeight: "bold", top: 14, right: 11, bodyTop: 6, bodyRight: 11, h: 8, size: 6, rows: [
    r("h", "شرایط محیط:", 1, { c: Y, semi: true }),
    r("w", "مهیا کردن امکان آرامش", 2, { semi: true }),
    r("w", "برطرف کردن امکان حواسپرتی‌های محیط بیرون", 1, { semi: true }),
    r("d", "وضع مناسب بدن بر روی زمین یا صندلی برای تمرین", 0, { h: 7, size: 5 }),
    r("d", "رفع مزاحمت‌های احتمالی در بیرون (زنگ در، تلفن، انجام تماس) این تمرین زمانی که برای انجام", 0, { h: 7, size: 5 }),
    r("e", "کاری عجله دارید)", 0, { h: 7, size: 5 }),
  ] },
};

const INDENT: Record<Kind, number> = { b: 0, w: 0, h: 0, c: 6, d: 9, e: 15 };

const SlideText = ({ s }: { s: SlideData }) => (
  <Content>
    <Head $top={s.top} $right={s.right}>
      <Heading $size={s.titleSize ?? 11} $weight={s.titleWeight ?? "semi"}>{s.title}</Heading>
      {s.sub && <Heading $size={s.subSize ?? 10} $weight={s.subWeight} $c={s.subColor}>{s.sub}</Heading>}
    </Head>
    <Rule />
    <Body $top={s.bodyTop} $right={s.bodyRight}>
      {s.rows.map((l, i) => (
        <Line key={i} $h={l.h ?? s.h} $before={l.before ?? 0} $size={l.size ?? s.size} $c={l.c ?? W} $in={INDENT[l.k]} $semi={l.semi}>
          {l.k === "b" && <Dot $c="#ffc61a" />}
          {l.k === "w" && <Dot $c="#fff" />}
          {l.k === "d" && <Dash />}
          <span>{l.t}</span>
        </Line>
      ))}
    </Body>
  </Content>
);

const Slide = ({ n }: { n: number }) => (
  <SlideItem>
    <Frame>
      <Thumb>
        <Sea />
        {SLIDES[n] && <SlideText s={SLIDES[n]} />}
        {n === 16 && (
          <Content>
            <Cover>
              <Heading $size={11}>{TITLE}</Heading>
              <CoverBody>
                <Heading $size={11}>تمدد اعصاب</Heading>
                <Heading $size={12} $weight="bold">PMR</Heading>
              </CoverBody>
            </Cover>
          </Content>
        )}
      </Thumb>
    </Frame>
    <Caption><span>{n}</span><StarIcon /></Caption>
  </SlideItem>
);

/* ---------- sections ---------- */

const TopBar = () => (
  <>
    <TitleBar>
      <QuickAccess>
        <QuickButton $w={22} aria-label="Save"><SaveIcon /></QuickButton>
        <QuickButton $w={76} $dim aria-label="Undo"><UndoIcon /><Arrow c="#fff" /></QuickButton>
        <QuickButton $w={6} aria-label="Repeat"><RedoIcon /></QuickButton>
        <QuickButton $w={86} aria-label="Start slide show"><ShowIcon /></QuickButton>
        <QuickButton $w={6} aria-label="Customize toolbar">
          <Icon w={5} h={6} fill="#fff"><path d="M0 0h5v1H0zM0 3h5L2.500 6z" /></Icon>
        </QuickButton>
      </QuickAccess>
      <DocTitle>دانلود پاورپوینت بررسی آرامش‌یابی بعنوان یک شیوه درمانی - PowerPoint (Product Activation Failed)</DocTitle>
      <WindowButtons>
        <WindowButton aria-label="Ribbon display"><Icon w={13} h={10} stroke="#fff" crisp><path d="M.5.5h12v9H.5zM.5 2.500h12M6.500 8V4M4.500 6l2-2 2 2" /></Icon></WindowButton>
        <WindowButton aria-label="Minimize"><Icon w={9} h={3} fill="#fff"><path d="M0 1h9v2H0z" /></Icon></WindowButton>
        <WindowButton aria-label="Restore"><Icon w={10} h={10} stroke="#fff" crisp><path d="M.5 3.500h7v6h-7zM.5 4.500h7M2.500 3V.5h7v6H8" /></Icon></WindowButton>
        <WindowButton aria-label="Close"><Icon w={10} h={10} stroke="#fff" sw={2}><path d="M.5.5l9 9M9.500.5l-9 9" /></Icon></WindowButton>
      </WindowButtons>
    </TitleBar>
    <TabBar>
      <Tab $w={58} $after={5}>File</Tab>
      <Tab $w={60} $active>Home</Tab>
      <Tab $w={59}>Insert</Tab>
      <Tab $w={64}>Design</Tab>
      <Tab $w={87}>Transitions</Tab>
      <Tab $w={89}>Animations</Tab>
      <Tab $w={87}>Slide Show</Tab>
      <Tab $w={65}>Review</Tab>
      <Tab $w={55}>View</Tab>
      <TellMe>
        <Icon w={10} h={14} stroke="#efc3b5" sw={1.3}><path d="M3 9.500C3 7.500 1 7 1 4.500a4 4 0 0 1 8 0C9 7 7 7.500 7 9.500zM3 11.500h4M3.500 13.500h3" /></Icon>
        <TellInput placeholder="Tell me what you want to do..." aria-label="Tell me what you want to do" />
      </TellMe>
      <Tab $w={57}>Sign in</Tab>
      <ShareButton>
        <Icon w={15} h={16} stroke="#fff" sw={1.4}><circle cx="7" cy="5" r="4" /><path d="M1 15.500c0-4 2-6 5-6.500M11.500 9.500v6M8.500 12.500h6" /></Icon>
        Share
      </ShareButton>
    </TabBar>
  </>
);

const Ribbon = () => (
  <RibbonBar>
    <Group $w={157}>
      <GroupBody $pad={4}>
        <BigButton $w={42} $off><BigIcon><PasteIcon /></BigIcon><BigLine>Paste</BigLine><BigLine><Arrow c="#b0b0b0" /></BigLine></BigButton>
        <Column>
          <SmallButton><ScissorsIcon />Cut</SmallButton>
          <SmallButton $gap={8}><CopyIcon />Copy<Arrow /></SmallButton>
          <SmallButton><BrushIcon />Format Painter</SmallButton>
        </Column>
      </GroupBody>
      <GroupFooter><GroupName>Clipboard</GroupName><Launcher /></GroupFooter>
    </Group>
    <Divider />
    <Group $w={126}>
      <GroupBody>
        <BigButton $w={42}><BigIcon><NewSlideIcon /></BigIcon><BigLine>New</BigLine><BigLine>Slide<Arrow /></BigLine></BigButton>
        <Column>
          <SmallButton><LayoutIcon />Layout<Arrow /></SmallButton>
          <SmallButton><ResetIcon />Reset</SmallButton>
          <SmallButton><SectionIcon />Section<Arrow /></SmallButton>
        </Column>
      </GroupBody>
      <GroupFooter><GroupName>Slides</GroupName></GroupFooter>
    </Group>
    <Divider />
    <Group $w={227}>
      <GroupBody $pad={4}>
        <Column>
          <ToolRow $first>
            <Combo $w={98}><ComboInput aria-label="Font" /><ComboArrow aria-label="Fonts"><Arrow c={G} /></ComboArrow></Combo>
            <Combo $w={47}><ComboInput aria-label="Font size" defaultValue="44" /><ComboArrow aria-label="Sizes"><Arrow c={G} /></ComboArrow></Combo>
            <Tool $w={25} aria-label="Grow font"><Icon w={14} h={14} stroke="#a6a6a6" sw={1.5}><path d="M1 13L5.500 3 10 13M2.500 9.500h6" /><path d="M9 3l2.500-3L14 3z" fill="#a6a6a6" stroke="none" /></Icon></Tool>
            <Tool aria-label="Shrink font"><Icon w={12} h={14} stroke="#a6a6a6" sw={1.5}><path d="M1 13l3.500-8L8 13M2 10.500h5" /><path d="M7 1h5L9.500 4z" fill="#a6a6a6" stroke="none" /></Icon></Tool>
            <ToolSep />
            <Tool aria-label="Clear formatting"><EraserIcon /></Tool>
          </ToolRow>
          <ToolRow>
            <Tool><b>B</b></Tool>
            <Tool><i>I</i></Tool>
            <Tool><b><u>U</u></b></Tool>
            <Tool><b>S</b></Tool>
            <Tool $size={11}><s>abc</s></Tool>
            <Tool $w={33} $split aria-label="Character spacing"><Icon w={15} h={15} stroke="#a6a6a6"><path d="M0 0L3.500 8.500 7 0" strokeWidth="1.300" /><path d="M7 8.500L10.500 0 14 8.500M8.500 6h4" strokeWidth="1.300" /><path d="M0 12h14M2.500 9.500L0 12l2.500 2.500M11.500 9.500L14 12l-2.500 2.500" /></Icon><Arrow c={G} /></Tool>
            <Tool $w={34} $split>Aa<Arrow c={G} /></Tool>
            <ToolSep />
            <Tool $split><b>A</b><Arrow c={G} /></Tool>
          </ToolRow>
        </Column>
      </GroupBody>
      <GroupFooter><GroupName>Font</GroupName><Launcher off /></GroupFooter>
    </Group>
    <Divider />
    <Group $w={345}>
      <GroupBody $pad={4}>
        <Column $w={193}>
          <ToolRow $first>
            <Tool $split aria-label="Bullets"><BulletsIcon /><Arrow c={G} /></Tool>
            <Tool $split aria-label="Numbering"><NumbersIcon /><Arrow c={G} /></Tool>
            <ToolSep />
            <Tool aria-label="Decrease indent"><IndentIcon /></Tool>
            <Tool aria-label="Increase indent"><IndentIcon flip /></Tool>
            <ToolSep />
            <Tool $split aria-label="Line spacing"><SpacingIcon /><Arrow c={G} /></Tool>
          </ToolRow>
          <ToolRow>
            <Tool aria-label="Align left"><AlignIcon kind="l" /></Tool>
            <Tool aria-label="Center"><AlignIcon kind="c" /></Tool>
            <Tool aria-label="Align right"><AlignIcon kind="r" /></Tool>
            <Tool $split aria-label="Justify"><AlignIcon kind="j" /><Arrow c={G} /></Tool>
            <ToolSep />
            <Tool aria-label="Left to right"><ParaIcon /></Tool>
            <Tool aria-label="Right to left"><ParaIcon rtl /></Tool>
            <ToolSep />
            <Tool $split aria-label="Columns"><ColumnsIcon /><Arrow c={G} /></Tool>
          </ToolRow>
        </Column>
        <Column>
          <SmallButton $off><TextDirIcon />Text Direction<Arrow c={G} /></SmallButton>
          <SmallButton $off><AlignTextIcon />Align Text<Arrow c={G} /></SmallButton>
          <SmallButton $off><SmartIcon />Convert to SmartArt<Arrow c={G} /></SmallButton>
        </Column>
      </GroupBody>
      <GroupFooter><GroupName>Paragraph</GroupName><Launcher off /></GroupFooter>
    </Group>
    <Divider />
    <Group $w={348}>
      <GroupBody $pad={5}>
        <Gallery>
          <GalleryGrid>
            {SHAPES.map((s, i) => (
              <ShapeButton key={i} aria-label="Shape"><Icon w={15} h={15} stroke="#aaa">{s}</Icon></ShapeButton>
            ))}
          </GalleryGrid>
          <GalleryScroll>
            <GalleryStep aria-label="Previous shapes"><Icon w={5} h={3} fill={G}><path d="M0 3h5L2.500 0z" /></Icon></GalleryStep>
            <GalleryStep aria-label="Next shapes"><Arrow c={G} /></GalleryStep>
            <GalleryStep aria-label="All shapes"><Icon w={7} h={6} fill={G}><path d="M0 0h7v1H0zM1 3h5L3.500 6z" /></Icon></GalleryStep>
          </GalleryScroll>
        </Gallery>
        <BigButton $w={51}><BigIcon><ArrangeIcon /></BigIcon><BigLine>Arrange</BigLine><BigLine><Arrow /></BigLine></BigButton>
        <BigButton $w={41} $off><BigIcon><QuickIcon /></BigIcon><BigLine>Quick</BigLine><BigLine>Styles<Arrow c={G} /></BigLine></BigButton>
        <Column>
          <SmallButton $off><FillIcon />Shape Fill<Arrow c={G} /></SmallButton>
          <SmallButton $off><OutlineIcon />Shape Outline<Arrow c={G} /></SmallButton>
          <SmallButton $off><EffectsIcon />Shape Effects<Arrow c={G} /></SmallButton>
        </Column>
      </GroupBody>
      <GroupFooter><GroupName>Drawing</GroupName><Launcher off /></GroupFooter>
    </Group>
    <Divider />
    <Group $w={91}>
      <GroupBody>
        <Column>
          <SmallButton><FindIcon />Find</SmallButton>
          <SmallButton $gap={8}><ReplaceIcon />Replace<Arrow /></SmallButton>
          <SmallButton><SelectIcon />Select<Arrow /></SmallButton>
        </Column>
      </GroupBody>
      <GroupFooter><GroupName>Editing</GroupName></GroupFooter>
    </Group>
    <Divider />
    <RibbonEnd>
      <button aria-label="Collapse ribbon"><Icon w={12} h={8} stroke="#666" sw={2}><path d="M2 6l4-4 4 4" /></Icon></button>
    </RibbonEnd>
  </RibbonBar>
);

const V = "#666";
const Status = () => (
  <StatusBar>
    <StatusLeft>
      <span>Slide 23 of 23</span>
      <Icon w={16} h={13} stroke={V}><path d="M1 1.500c2-1 4-.5 5.500 1v9.500c-1.500-1.500-3.500-1.500-5.500-1zM6.500 2.500C7.500 1.500 9 1 11 1M6.500 12c1.500-1.500 4-1.500 5.500-1V8" /><path d="M9 9l.5-2L14 1.500l1.500 1.200L11 8.500z" fill="#999" /></Icon>
      <span>English (United States)</span>
    </StatusLeft>
    <StatusRight>
      <ViewButton aria-label="Normal"><Icon w={14} h={13} stroke={V} crisp><path d="M.5.5h13v12H.5zM4.500.5v12M4.500 9.500h9M6.500 3.500h5v3h-5zM2 3.500h1M2 6.500h1" /></Icon></ViewButton>
      <ViewButton $active aria-label="Slide sorter"><Icon w={14} h={13} stroke={V} crisp><path d="M.5.5h5v4h-5zM8.500.5h5v4h-5zM.5 8.500h5v4h-5zM8.500 8.500h5v4h-5z" /></Icon></ViewButton>
      <ViewButton aria-label="Reading view"><Icon w={13} h={13} stroke={V} crisp><path d="M.5 1.500h5l1 1 1-1h5v9h-5l-1 1-1-1h-5zM6.500 2v10M2 4.500h3M2 6.500h3M2 8.500h3M8 4.500h3M8 6.500h3M8 8.500h3" /></Icon></ViewButton>
      <ViewButton aria-label="Slide show"><Icon w={13} h={13} stroke={V}><path d="M0 1h13" strokeWidth="2" /><path d="M1.500 2v5.500h10V2M6.500 7.500V12M3.500 12.500h6" /></Icon></ViewButton>
      <ZoomButton aria-label="Zoom out"><Icon w={7} h={2} fill={V}><path d="M0 0h7v2H0z" /></Icon></ZoomButton>
      <ZoomRange type="range" min={0} max={100} defaultValue={43} aria-label="Zoom" />
      <ZoomButton aria-label="Zoom in"><Icon w={8} h={8} fill={V}><path d="M3 0h2v3h3v2H5v3H3V5H0V3h3z" /></Icon></ZoomButton>
      <Percent>87%</Percent>
      <ZoomButton aria-label="Fit slide to window"><Icon w={13} h={13} stroke={V}><path d="M.5.5h12v12H.5z" /><path d="M6.500 1.500v3M5 3l1.500-1.500L8 3M6.500 11.500v-3M5 10l1.500 1.500L8 10M1.500 6.500h3M3 5L1.500 6.500 3 8M11.500 6.500h-3M10 5l1.500 1.500L10 8" strokeWidth=".9" /></Icon></ZoomButton>
    </StatusRight>
  </StatusBar>
);

const OfficeLetter = styled.text`
  font: 700 12px "Open Sans", sans-serif;
`;
const BluetoothMark = ({ s = 1 }: { s?: number }) => (
  <path d="M-4 -4L4 4 0 8V-8L4 -4 -4 4" stroke="#fff" strokeWidth={1.6} fill="none" transform={`scale(${s})`} />
);

const Tasks = () => (
  <Taskbar>
    <StartButton aria-label="Start"><Icon w={16} h={16} fill="#fff"><path d="M0 2.300l6.500-.9v6.100H0zM7.300 1.300L16 0v7.500H7.300zM0 8.300h6.500v6.200L0 13.600zM7.300 8.300H16V16l-8.700-1.300z" /></Icon></StartButton>
    <Search>
      <Icon w={22} h={22} stroke="#fff" sw={2.5}><circle cx="11" cy="11" r="8.800" /></Icon>
      <SearchInput placeholder="Type here to search" aria-label="Search" />
      <Icon w={12} h={17} stroke="#a8a8a8"><path d="M3.500 1.500h5v9h-5zM1 7.500v5.500h10V7.500M6 13v3M3 16.500h6" /></Icon>
    </Search>
    <FirstTask aria-label="Task view"><Icon w={20} h={14} stroke="#fff" crisp><path d="M4.500.5h11v13h-11zM3 2.500H.5v9H3M17 2.500h2.500v9H17" /></Icon></FirstTask>
    <TaskItem aria-label="Edge"><Icon w={22} h={22} fill="#0078d7"><path d="M1 10C2 4 6 0 11.500 0 17 0 21 4 21 9.500V12H8c0 4 3 6 6.500 6 2 0 4-.6 5.500-1.500v4.200c-2 1-4 1.300-6 1.300-6 0-9.800-3.500-9.800-9 0-3.300 1.500-6 4.300-7.500C5 6 2.500 7.800 1 10zm7.200-1.500h7.300c0-2.500-1.300-4-3.500-4s-3.600 1.700-3.800 4z" /></Icon></TaskItem>
    <TaskItem aria-label="Bluetooth"><Icon w={18} h={22}><rect x=".5" width="17" height="22" rx="8" fill="#0a2a5c" /><g transform="translate(9 11)"><BluetoothMark /></g></Icon></TaskItem>
    <TaskItem aria-label="File Explorer"><Icon w={22} h={19}><path d="M0 1h8l1.500 2H22v16H0z" fill="#f7d774" /><path d="M0 5h22v13H0z" fill="#fde793" /><path d="M4 19v-8h14v8h-4v-4H8v4z" fill="#3fb2e8" /></Icon></TaskItem>
    <TaskItem aria-label="This PC"><Icon w={22} h={22}><path d="M6 0l16 4v12L8 13z" fill="#5ab8f0" /><path d="M6 0l2 13 14 3-9-14z" fill="#2f93dc" opacity=".45" /><path d="M0 16l7-2 6 1.500L6 18zM10 18l6-1.500 6 2L15 21z" fill="#d6d9dc" /></Icon></TaskItem>
    <TaskItem $open aria-label="Chrome">
      <Icon w={26} h={26}><g transform="translate(12 12)"><circle r="12" fill="#2ba24c" /><path d="M0 0V12A12 12 0 0 0 10.400 -6H0z" fill="#fbc116" /><path d="M-10.400 -6A12 12 0 0 1 10.400 -6H0z" fill="#e33b2e" /><circle r="5.500" fill="#fff" /><circle r="4.300" fill="#4285f4" /></g><circle cx="18.500" cy="18" r="8" fill="#9fcbe0" /><path d="M11 18l5-4 3 3 3-3 4 5-2 3H13z" fill="#3f6f7c" /><path d="M13 21h11l-3 4h-5z" fill="#e3f0f4" /></Icon>
    </TaskItem>
    <TaskItem $open aria-label="Word">
      <Icon w={22} h={22}><path d="M12 3h10v16H12z" fill="#fff" stroke="#2b579a" /><path d="M14 6h6M14 8.500h6M14 11h6M14 13.500h6M14 16h6" stroke="#2b579a" /><path d="M0 2.500L13 0v22L0 19.500z" fill="#2b579a" /><OfficeLetter x="0" y="15" fill="#fff">W</OfficeLetter></Icon>
    </TaskItem>
    <TaskItem $open aria-label="Paint">
      <Icon w={24} h={24}><path d="M1 14C1 8 6 4 12 4s10 4 9 9-4 3-5 5-3 4-7 3-8-3-8-7z" fill="#cfe6f2" /><circle cx="6" cy="10" r="2" fill="#d8433a" /><circle cx="11" cy="7.500" r="2" fill="#57a847" /><circle cx="16" cy="9" r="1.800" fill="#4285c8" /><circle cx="6" cy="15.500" r="2" fill="#f2b632" /><path d="M13 22L20 5" stroke="#e08b2c" strokeWidth="2.500" /><path d="M18 5l3-5 3 2-3 5z" fill="#b98a52" /></Icon>
    </TaskItem>
    <TaskItem $open $active aria-label="PowerPoint">
      <Icon w={22} h={22}><path d="M12 3h10v16H12z" fill="#fff" stroke="#d24726" /><circle cx="17" cy="8" r="3" stroke="#d24726" /><path d="M14 13.500h6M14 16h6" stroke="#d24726" /><path d="M0 2.500L13 0v22L0 19.500z" fill="#d24726" /><OfficeLetter x="3" y="15" fill="#fff">P</OfficeLetter></Icon>
    </TaskItem>
    <Tray>
      <TrayButton $w={24} aria-label="Hidden icons"><Icon w={12} h={7} stroke="#fff" sw={1.3}><path d="M.5 6.500L6 1l5.500 5.500" /></Icon></TrayButton>
      <TrayButton $w={24} aria-label="Bluetooth"><Icon w={11} h={15}><rect width="11" height="15" rx="5" fill="#0a3a78" /><g transform="translate(5.500 7.500)"><BluetoothMark s={0.7} /></g></Icon></TrayButton>
      <TrayButton $w={24} aria-label="Volume"><Icon w={17} h={13} stroke="#fff"><path d="M.5 4.500h2.500L6.500 1v11L3 8.500H.5zM8.500 4.500c1 1 1 3 0 4M10.800 2.800c2 2 2 5.400 0 7.400M13 1c3 3 3 8 0 11" /></Icon></TrayButton>
      <TrayButton $w={26} aria-label="Battery"><Icon w={16} h={12} stroke="#fff"><path d="M5 4.500h9.500v6H4.500V8M15.500 6v3M1.500 0v2.500M4.500 0v2.500M.5 2.500h5v2c0 1.500-1 2-2.500 2s-2.500-.5-2.500-2zM3 6.500V10" /><path d="M6.500 6h7v3.500h-7z" fill="#fff" stroke="none" /></Icon></TrayButton>
      <TrayButton $w={26} aria-label="Network"><Icon w={14} h={13} stroke="#fff" sw={1.2}><path d="M.6 12A12 12 0 0 1 12 1.500M3.800 12A9 9 0 0 1 12 4.500M7 12.300A6 6 0 0 1 12 7.500" /><path d="M10 13a2 2 0 0 1 3-2v2z" fill="#fff" stroke="none" /></Icon></TrayButton>
      <TrayButton $w={26}><span>فا</span><span>FA</span></TrayButton>
      <TrayButton $w={76}><span>12:21 PM</span><span>2/14/2025</span></TrayButton>
      <TrayButton $w={29} aria-label="Notifications"><Icon w={16} h={16} stroke="#fff" sw={1.2}><path d="M.6.600h14.800v11.400h-5L8 14.500 5.600 12h-5z" /></Icon></TrayButton>
      <ShowDesktop aria-label="Show desktop" />
    </Tray>
  </Taskbar>
);

export default function App() {
  return (
    <Shell>
      <Global />
      <TopBar />
      <Ribbon />
      <Workspace>
        <SeaDefs />
        <Sorter>
          <SlideGrid>
            {Array.from({ length: 20 }, (_, i) => <Slide key={i} n={i + 1} />)}
          </SlideGrid>
        </Sorter>
        <ScrollBar>
          <ScrollStep aria-label="Scroll up"><Up /></ScrollStep>
          <ScrollTrack><ScrollThumb /></ScrollTrack>
          <ScrollStep aria-label="Scroll down"><Icon w={7} h={4} fill="#666"><path d="M0 0h7L3.500 4z" /></Icon></ScrollStep>
        </ScrollBar>
        <Watermark>
          <WatermarkTitle>Activate Windows</WatermarkTitle>
          Go to Settings to activate Windows.
        </Watermark>
      </Workspace>
      <Status />
      <Tasks />
    </Shell>
  );
}
